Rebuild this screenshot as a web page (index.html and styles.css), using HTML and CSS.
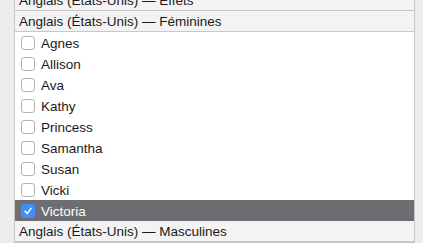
FILE: index.html
```html
<!DOCTYPE html>
<html>
	<head>
		<meta charset="UTF-8">
		<title>Voix</title>
		<link rel="stylesheet" href="styles.css">
	</head>
	<body>
		<div id="voices">
			<div class="group">Anglais (États-Unis) — Effets</div>
			<div class="group">Anglais (États-Unis) — Féminines</div>
			<div class="voice"><span class="box"></span>Agnes</div>
			<div class="voice"><span class="box"></span>Allison</div>
			<div class="voice"><span class="box"></span>Ava</div>
			<div class="voice"><span class="box"></span>Kathy</div>
			<div class="voice"><span class="box"></span>Princess</div>
			<div class="voice"><span class="box"></span>Samantha</div>
			<div class="voice"><span class="box"></span>Susan</div>
			<div class="voice"><span class="box"></span>Vicki</div>
			<div class="voice selected"><span class="box checked"><svg width="10" height="10" viewBox="0 0 10 10"><path d="M2 5.2 L4.2 7.6 L8 2.4" fill="none" stroke="#fff" stroke-width="1.5" stroke-linecap="round" stroke-linejoin="round"/></svg></span>Victoria</div>
			<div class="group">Anglais (États-Unis) — Masculines</div>
		</div>
	</body>
</html>
```

FILE: styles.css
```css
html, body {
	margin: 0;
	padding: 0;
	background-color: #ececec;
	overflow: hidden;
}
body {
	font-family: "Liberation Sans", Arial, sans-serif;
	font-size: 13.5px;
	color: #1a1a1a;
}
#voices {
	width: 399px;
	margin: -10px 0 0 14px;
	background-color: #fff;
	border-left: solid 1px #c6c6c6;
	border-right: solid 1px #c6c6c6;
	border-bottom: solid 1px #c6c6c6;
}
#voices .group {
	height: 18px;
	line-height: 18px;
	padding: 2px 0 0 4px;
	background-color: #f3f3f3;
	border-bottom: solid 1px #c8c8c8;
}
#voices .voice {
	display: flex;
	align-items: center;
	height: 21px;
	padding-left: 6px;
	padding-top: 1px;
	box-sizing: border-box;
}
#voices .box {
	display: flex;
	align-items: center;
	justify-content: center;
	width: 12px;
	height: 12px;
	margin-right: 6px;
	border: solid 1px #b4b4b4;
	border-radius: 3px;
	background-color: #fff;
}
#voices .selected {
	background-color: #6e6d71;
	color: #fff;
}
#voices .box.checked {
	border-color: #3e8ff7;
	background-color: #3e8ff7;
}
```
